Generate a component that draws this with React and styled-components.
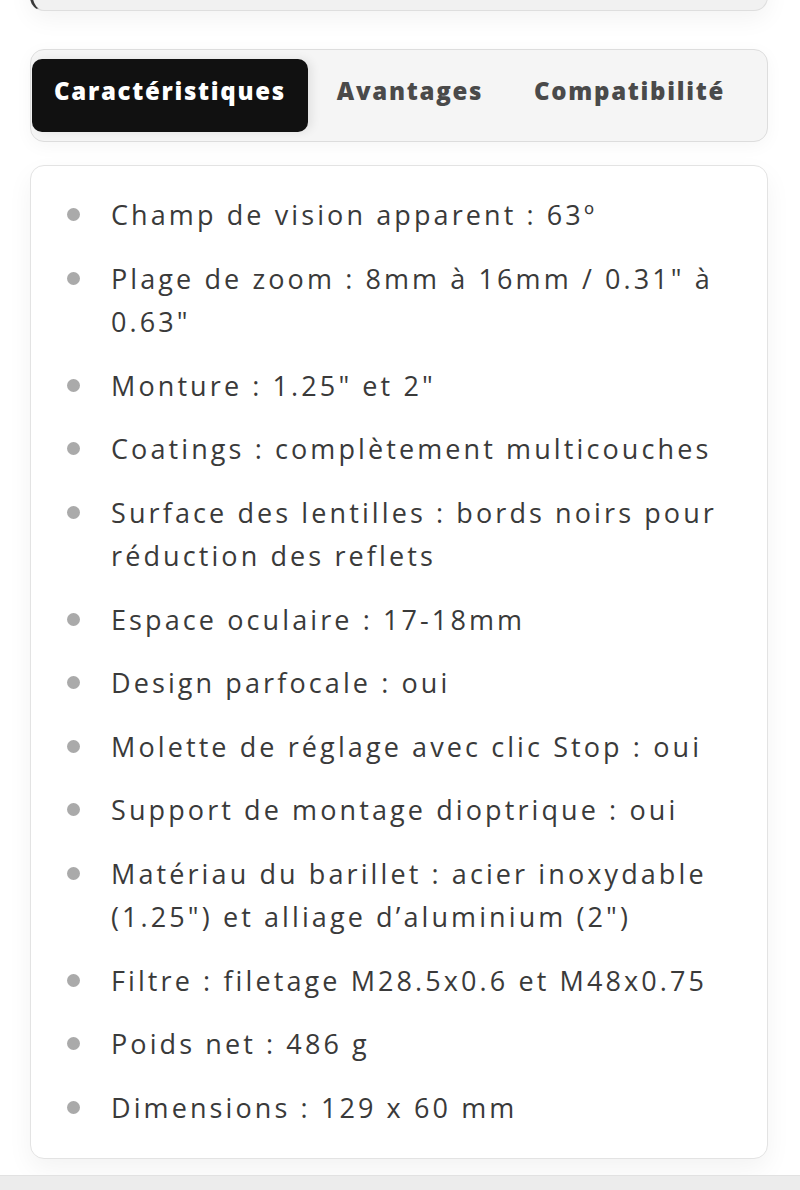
import React from "react";
import styled, { createGlobalStyle } from "styled-components";

const Global = createGlobalStyle`
  html, body { margin: 0; padding: 0; background: #ffffff; }
  body { font-family: "Open Sans", "Liberation Sans", sans-serif; }
`;

const Page = styled.div`
  width: 800px;
  height: 1190px;
  overflow: hidden;
  background: #fff;
  display: flex;
  flex-direction: column;
`;

const Inner = styled.div`
  padding: 0 32px 0 30px;
  display: flex;
  flex-direction: column;
  flex: 1;
`;

const TopCard = styled.div`
  height: 40px;
  margin-top: -31px;
  background: #f1f1f1;
  border: 1px solid #dedede;
  border-left: 3px solid #3a3a3a;
  border-radius: 0 0 14px 14px;
  box-shadow: 0 8px 24px rgba(0, 0, 0, 0.05);
`;

const TabBar = styled.div`
  margin-top: 38px;
  height: 93px;
  box-sizing: border-box;
  background: #f5f5f5;
  border: 1px solid #dddddd;
  border-radius: 14px;
  padding: 9px 1px;
  display: flex;
  align-items: stretch;
  gap: 7px;
  box-shadow: 0 4px 18px rgba(0, 0, 0, 0.04);
`;

const Tab = styled.div`
  display: flex;
  align-items: center;
  padding: 0 22px 10px;
  border-radius: 10px;
  font-family: "Open Sans", "Liberation Sans", sans-serif;
  font-weight: 800;
  font-size: 24px;
  letter-spacing: 1.7px;
  color: ${(p) => (p.$active ? "#ffffff" : "#4a4a4a")};
  background: ${(p) => (p.$active ? "#111111" : "transparent")};
  box-shadow: ${(p) => (p.$active ? "4px 0 10px rgba(0,0,0,0.08)" : "none")};
`;

const Card = styled.div`
  margin-top: 23px;
  background: #ffffff;
  border: 1px solid #e3e3e3;
  border-radius: 14px;
  padding: 27px 28px 29px 36px;
  box-shadow: 0 10px 26px rgba(0, 0, 0, 0.05);
`;

const List = styled.ul`
  list-style: none;
  margin: 0;
  padding: 0;
  display: flex;
  flex-direction: column;
  gap: 20px;
`;

const Item = styled.li`
  display: flex;
  align-items: flex-start;
  font-family: "Open Sans", "Liberation Sans", sans-serif;
  font-size: 27px;
  line-height: 43.5px;
  letter-spacing: 3.1px;
  color: #3a3a3a;
`;

const Dot = styled.span`
  flex: none;
  width: 13px;
  height: 13px;
  border-radius: 50%;
  background: #aaaaaa;
  margin-top: 15px;
  margin-right: 31px;
`;

const BottomBand = styled.div`
  margin-top: auto;
  height: 14px;
  background: #ececec;
  border-top: 1px solid #e2e2e2;
`;

const items = [
  "Champ de vision apparent : 63º",
  "Plage de zoom : 8mm à 16mm / 0.31\" à 0.63\"",
  "Monture : 1.25\" et 2\"",
  "Coatings : complètement multicouches",
  "Surface des lentilles : bords noirs pour réduction des reflets",
  "Espace oculaire : 17-18mm",
  "Design parfocale : oui",
  "Molette de réglage avec clic Stop : oui",
  "Support de montage dioptrique : oui",
  "Matériau du barillet : acier inoxydable (1.25\") et alliage d’aluminium (2\")",
  "Filtre : filetage M28.5x0.6 et M48x0.75",
  "Poids net : 486 g",
  "Dimensions : 129 x 60 mm",
];

export default function App() {
  return (
    <Page>
      <Global />
      <Inner>
        <TopCard />
        <TabBar>
          <Tab $active>Caractéristiques</Tab>
          <Tab>Avantages</Tab>
          <Tab>Compatibilité</Tab>
        </TabBar>
        <Card>
          <List>
            {items.map((t) => (
              <Item key={t}>
                <Dot />
                <span>{t}</span>
              </Item>
            ))}
          </List>
        </Card>
      </Inner>
      <BottomBand />
    </Page>
  );
}
